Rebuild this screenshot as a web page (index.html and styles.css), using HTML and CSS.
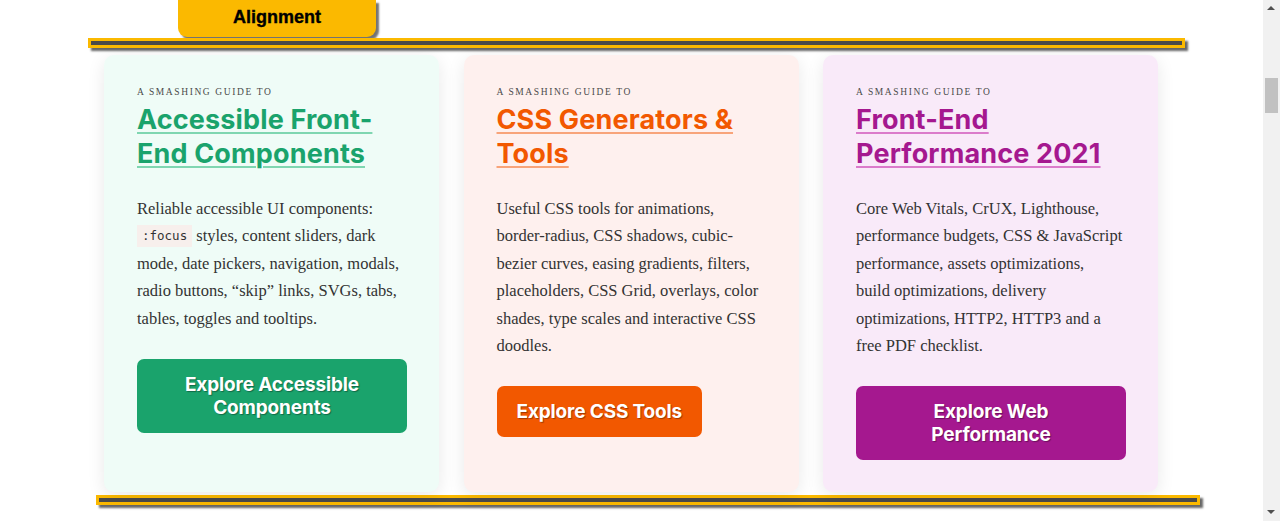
FILE: index.html
```html
<!DOCTYPE html>
<html lang="en">
<head>
<meta charset="utf-8">
<title>Alignment</title>
<link rel="stylesheet" href="styles.css">
</head>
<body>
<div class="viewport">
  <main class="page">
    <div class="tab">Alignment</div>
    <div class="rule rule-top"></div>
    <section class="cards">
      <article class="card card-green">
        <p class="kicker">A Smashing Guide To</p>
        <h2 class="title"><a href="#">Accessible Front-End Components</a></h2>
        <p class="desc">Reliable accessible UI components: <code>:focus</code> styles, content sliders, dark mode, date pickers, navigation, modals, radio buttons, “skip” links, SVGs, tabs, tables, toggles and tooltips.</p>
        <a class="btn btn-wide" href="#">Explore Accessible Components</a>
      </article>
      <article class="card card-orange">
        <p class="kicker">A Smashing Guide To</p>
        <h2 class="title"><a href="#">CSS Generators &amp; Tools</a></h2>
        <p class="desc">Useful CSS tools for animations, border-radius, CSS shadows, cubic-bezier curves, easing gradients, filters, placeholders, CSS Grid, overlays, color shades, type scales and interactive CSS doodles.</p>
        <a class="btn" href="#">Explore CSS Tools</a>
      </article>
      <article class="card card-purple">
        <p class="kicker">A Smashing Guide To</p>
        <h2 class="title"><a href="#">Front-End Performance 2021</a></h2>
        <p class="desc">Core Web Vitals, CrUX, Lighthouse, performance budgets, CSS &amp; JavaScript performance, assets optimizations, build&nbsp;optimizations, delivery optimizations, HTTP2, HTTP3 and a free&nbsp;PDF checklist.</p>
        <a class="btn btn-wide" href="#">Explore Web Performance</a>
      </article>
    </section>
    <div class="rule rule-bottom"></div>
  </main>
  <div class="scrollbar">
    <div class="sb-arrow sb-up"></div>
    <div class="sb-track"><div class="sb-thumb"></div></div>
    <div class="sb-arrow sb-down"></div>
  </div>
</div>
</body>
</html>
```

FILE: styles.css
```css
* { box-sizing: border-box; }
html, body { margin: 0; padding: 0; height: 100%; overflow: hidden; background: #fff; }
.viewport { display: flex; height: 521px; width: 1280px; }
.page { flex: 1; min-width: 0; }

.tab {
  margin-left: 178px;
  width: 198px;
  height: 37px;
  background: #fbb900;
  border-radius: 0 0 9px 9px;
  box-shadow: 3px 3px 2px rgba(0,0,0,0.55);
  font-family: "Liberation Sans", Arial, sans-serif;
  font-weight: 700;
  font-size: 18px;
  -webkit-text-stroke: 0.35px #000;
  color: #000;
  text-align: center;
  line-height: 35px;
}

.rule {
  height: 10px;
  background: #4a4a4a;
  border: 3px solid #fbb900;
  box-shadow: 3px 3px 2px rgba(0,0,0,0.6);
}
.rule-top { margin: 1px 0 0 88px; width: 1097px; }
.rule-bottom { margin: 3px 0 0 96px; width: 1104px; }

.cards {
  margin: 7px 0 0 104px;
  display: grid;
  grid-template-columns: repeat(3, 335px);
  column-gap: 24.5px;
  height: 437px;
}
.card {
  border-radius: 10px;
  padding: 31px 32px 0 33px;
  box-shadow: 0 4px 18px rgba(0,0,0,0.09);
}
.card-green { background: #effcf7; --c: #1aa36c; --u: #7fd6b1; }
.card-orange { background: #fef0ee; --c: #f25800; --u: #f8a47a; }
.card-purple { background: #f9eaf9; --c: #a5188f; --u: #db7ccb; }

.kicker {
  margin: 0;
  font-family: "Liberation Serif", "Times New Roman", serif;
  font-size: 9.5px;
  letter-spacing: 1.6px;
  text-transform: uppercase;
  color: #4a4a4a;
  line-height: 12px;
}
.title {
  margin: 5px 0 0;
  font-family: "Inter", "Liberation Sans", sans-serif;
  font-weight: 700;
  font-size: 27px;
  line-height: 34px;
  letter-spacing: 0.15px;
}
.title a {
  color: var(--c);
  text-decoration: underline;
  text-decoration-color: var(--u);
  text-decoration-thickness: 1.5px;
  text-underline-offset: 3px;
}
.desc {
  margin: 24px 0 0;
  font-family: "Liberation Serif", "Times New Roman", serif;
  font-size: 16.5px;
  line-height: 27.4px;
  color: #333;
}
.desc code {
  display: inline-block;
  font-family: "DejaVu Sans Mono", monospace;
  font-size: 12.5px;
  line-height: 22px;
  background: #f7efec;
  color: #333;
  padding: 0 5px;
  vertical-align: 1px;
}
.btn {
  display: inline-block;
  margin-top: 27px;
  max-width: 100%;
  padding: 14px 20px;
  border-radius: 7px;
  background: var(--c);
  color: #fff;
  text-decoration: none;
  text-align: center;
  font-family: "Inter", "Liberation Sans", sans-serif;
  font-weight: 700;
  font-size: 19px;
  line-height: 23px;
  letter-spacing: -0.15px;
  text-shadow: 1px 1px 1px rgba(0,0,0,0.35);
}
.btn-wide { width: 270px; padding: 14px 36px; }

.scrollbar {
  width: 17px;
  flex: none;
  background: #f1f1f1;
  display: flex;
  flex-direction: column;
}
.sb-arrow { height: 17px; position: relative; }
.sb-up::after, .sb-down::after {
  content: "";
  position: absolute;
  left: 4px;
  border-left: 4.5px solid transparent;
  border-right: 4.5px solid transparent;
}
.sb-up::after { top: 6px; border-bottom: 4.5px solid #505050; }
.sb-down::after { top: 6px; border-top: 4.5px solid #505050; }
.sb-track { flex: 1; padding-top: 61px; }
.sb-thumb { margin: 0 2px; height: 35px; background: #c1c1c1; }
```
